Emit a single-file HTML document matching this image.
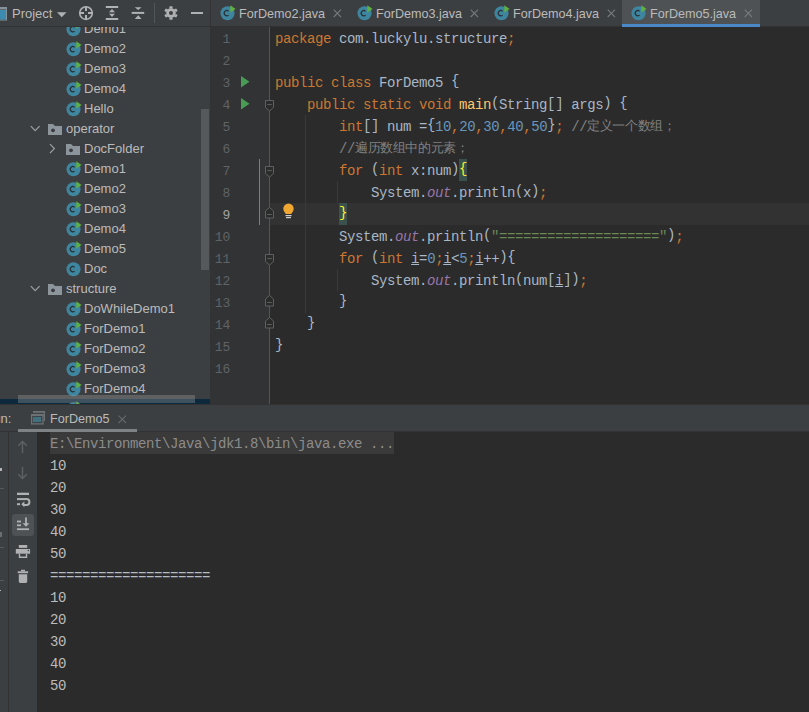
<!DOCTYPE html>
<html><head><meta charset="utf-8">
<style>
*{margin:0;padding:0;box-sizing:border-box}
html,body{width:809px;height:712px;overflow:hidden;background:#3c3f41}
body{position:relative;font-family:"Liberation Sans",sans-serif;font-size:13px;color:#bbbbbb}
.a{position:absolute}
.ui{font-family:"Liberation Sans",sans-serif;font-size:13px;color:#bbbbbb;white-space:pre;line-height:20px}
.mono{font-family:"Liberation Mono",monospace;font-size:14px;letter-spacing:-0.4px;white-space:pre;line-height:22px;color:#a9b7c6}
.k{color:#cc7832}.n{color:#6897bb}.s{color:#6a8759}.c{color:#808080}.f{color:#9876aa;font-style:italic}.m{color:#ffc66d}
.u{text-decoration:underline;text-underline-offset:1px;text-decoration-thickness:1px}
.bm{color:#ffef28}
.br{position:relative;top:-2px}
.pp{position:relative;top:-2px}
.sb{position:relative;top:-1px}
.cjk{font-size:12.5px;line-height:10px;position:relative;top:-1px}
.ln{color:#606366;font-size:13px;letter-spacing:-0.2px}
.tab{font-size:12.6px}
svg{display:block}
</style></head><body>
<svg width="0" height="0" style="position:absolute">
<defs>
<symbol id="ci" viewBox="0 0 16 16">
<circle cx="8" cy="8.3" r="7" fill="#3e86a0"/>
<path d="M9.1 6.3 A2.6 2.6 0 1 0 9.1 10.1" fill="none" stroke="#2a2d2f" stroke-width="1.15"/>
<path d="M10.8 0.3 L16.1 4 L10.8 7.6 Z" fill="#5fb043"/>
</symbol>
<symbol id="cp" viewBox="0 0 16 16">
<circle cx="8" cy="8.3" r="7" fill="#3e86a0"/>
<path d="M9.1 6.3 A2.6 2.6 0 1 0 9.1 10.1" fill="none" stroke="#2a2d2f" stroke-width="1.15"/>
</symbol>
<symbol id="fo" viewBox="0 0 14 11">
<path d="M0 0 H5 L7 2 H14 V11 H0 Z" fill="#8c959b"/>
<circle cx="5" cy="6.3" r="1.9" fill="#3a3d3f"/>
</symbol>
</defs>
</svg>

<!-- ===== top header (project) ===== -->
<div class="a" style="left:0;top:0;width:210px;height:26px;background:#3c3f41"></div>
<div class="a" style="left:0;top:26px;width:809px;height:1px;background:#323232"></div>
<div class="a" style="left:210px;top:0;width:1px;height:26px;background:#323232"></div>

<!-- project icon -->
<svg class="a" style="left:0;top:7px" width="8" height="14"><rect x="-7" y="0.5" width="13.5" height="12.5" fill="none" stroke="#87939a" stroke-width="1"/><rect x="-7" y="0" width="13.5" height="2.5" fill="#87939a"/><rect x="-6" y="3" width="12" height="9.5" fill="#3d8baf"/></svg>
<div class="a ui" style="left:12px;top:4px">Project</div>
<svg class="a" style="left:57px;top:12px" width="10" height="6"><path d="M0 0.3 H9.5 L4.75 5.3 Z" fill="#afb1b3"/></svg>
<svg class="a" style="left:78px;top:5px" width="16" height="16"><circle cx="8" cy="8.1" r="6.3" fill="none" stroke="#afb1b3" stroke-width="1.6"/><path d="M1.5 8.1 H6 M10 8.1 H14.5 M8 1.6 V6.1 M8 10.1 V14.6" stroke="#afb1b3" stroke-width="2"/></svg>
<svg class="a" style="left:105px;top:5px" width="14" height="16"><rect x="0.8" y="1" width="12.4" height="2" fill="#afb1b3"/><rect x="0.8" y="13" width="12.4" height="2" fill="#afb1b3"/><path d="M4 7.2 L7 4.1 L10 7.2 Z M4 8.7 L7 11.9 L10 8.7 Z" fill="#afb1b3"/></svg>
<svg class="a" style="left:131px;top:5px" width="14" height="16"><path d="M3.8 2.2 H10.6 L7.2 5.1 Z M3.8 14.1 H10.6 L7.2 10.3 Z" fill="#afb1b3"/><rect x="0.7" y="6.9" width="12.5" height="2" fill="#afb1b3"/></svg>
<div class="a" style="left:154px;top:3px;width:1px;height:20px;background:#515658"></div>
<svg class="a" style="left:163px;top:5px" width="16" height="16"><g fill="#afb1b3"><circle cx="8" cy="8" r="4.8"/><path d="M6.6 1.2 H9.4 L9.8 3.4 L6.2 3.4 Z" transform="rotate(0 8 8)"/><path d="M6.6 1.2 H9.4 L9.8 3.4 L6.2 3.4 Z" transform="rotate(60 8 8)"/><path d="M6.6 1.2 H9.4 L9.8 3.4 L6.2 3.4 Z" transform="rotate(120 8 8)"/><path d="M6.6 1.2 H9.4 L9.8 3.4 L6.2 3.4 Z" transform="rotate(180 8 8)"/><path d="M6.6 1.2 H9.4 L9.8 3.4 L6.2 3.4 Z" transform="rotate(240 8 8)"/><path d="M6.6 1.2 H9.4 L9.8 3.4 L6.2 3.4 Z" transform="rotate(300 8 8)"/></g><circle cx="8" cy="8" r="2" fill="#3c3f41"/></svg>
<div class="a" style="left:191px;top:12px;width:12px;height:2px;background:#afb1b3"></div>

<!-- ===== project tree ===== -->
<div class="a" style="left:0;top:27px;width:210px;height:377px;overflow:hidden;background:#3c3f41">
<div class="a" style="left:0;top:-27px;width:210px;height:404px">
<svg class="a" style="left:64.5px;top:20.5px" width="17" height="16"><use href="#ci"/></svg>
<div class="a ui" style="left:84px;top:19px">Demo1</div>
<svg class="a" style="left:64.5px;top:40.5px" width="17" height="16"><use href="#ci"/></svg>
<div class="a ui" style="left:84px;top:39px">Demo2</div>
<svg class="a" style="left:64.5px;top:60.5px" width="17" height="16"><use href="#ci"/></svg>
<div class="a ui" style="left:84px;top:59px">Demo3</div>
<svg class="a" style="left:64.5px;top:80.5px" width="17" height="16"><use href="#ci"/></svg>
<div class="a ui" style="left:84px;top:79px">Demo4</div>
<svg class="a" style="left:64.5px;top:100.5px" width="17" height="16"><use href="#ci"/></svg>
<div class="a ui" style="left:84px;top:99px">Hello</div>
<svg class="a" style="left:30px;top:125px" width="12" height="8"><path d="M0.8 1.2 L5.2 5.6 L9.6 1.2" fill="none" stroke="#9da0a2" stroke-width="1.2"/></svg>
<svg class="a" style="left:48px;top:124px" width="14" height="11"><use href="#fo"/></svg>
<div class="a ui" style="left:66px;top:119px">operator</div>
<svg class="a" style="left:48px;top:143px" width="8" height="12"><path d="M2 1.2 L6.4 5.6 L2 10" fill="none" stroke="#9da0a2" stroke-width="1.2"/></svg>
<svg class="a" style="left:66px;top:144px" width="14" height="11"><use href="#fo"/></svg>
<div class="a ui" style="left:84px;top:139px">DocFolder</div>
<svg class="a" style="left:64.5px;top:160.5px" width="17" height="16"><use href="#ci"/></svg>
<div class="a ui" style="left:84px;top:159px">Demo1</div>
<svg class="a" style="left:64.5px;top:180.5px" width="17" height="16"><use href="#ci"/></svg>
<div class="a ui" style="left:84px;top:179px">Demo2</div>
<svg class="a" style="left:64.5px;top:200.5px" width="17" height="16"><use href="#ci"/></svg>
<div class="a ui" style="left:84px;top:199px">Demo3</div>
<svg class="a" style="left:64.5px;top:220.5px" width="17" height="16"><use href="#ci"/></svg>
<div class="a ui" style="left:84px;top:219px">Demo4</div>
<svg class="a" style="left:64.5px;top:240.5px" width="17" height="16"><use href="#ci"/></svg>
<div class="a ui" style="left:84px;top:239px">Demo5</div>
<svg class="a" style="left:64.5px;top:260.5px" width="17" height="16"><use href="#cp"/></svg>
<div class="a ui" style="left:84px;top:259px">Doc</div>
<svg class="a" style="left:30px;top:285px" width="12" height="8"><path d="M0.8 1.2 L5.2 5.6 L9.6 1.2" fill="none" stroke="#9da0a2" stroke-width="1.2"/></svg>
<svg class="a" style="left:48px;top:284px" width="14" height="11"><use href="#fo"/></svg>
<div class="a ui" style="left:66px;top:279px">structure</div>
<svg class="a" style="left:64.5px;top:300.5px" width="17" height="16"><use href="#ci"/></svg>
<div class="a ui" style="left:84px;top:299px">DoWhileDemo1</div>
<svg class="a" style="left:64.5px;top:320.5px" width="17" height="16"><use href="#ci"/></svg>
<div class="a ui" style="left:84px;top:319px">ForDemo1</div>
<svg class="a" style="left:64.5px;top:340.5px" width="17" height="16"><use href="#ci"/></svg>
<div class="a ui" style="left:84px;top:339px">ForDemo2</div>
<svg class="a" style="left:64.5px;top:360.5px" width="17" height="16"><use href="#ci"/></svg>
<div class="a ui" style="left:84px;top:359px">ForDemo3</div>
<svg class="a" style="left:64.5px;top:380.5px" width="17" height="16"><use href="#ci"/></svg>
<div class="a ui" style="left:84px;top:379px">ForDemo4</div>
<div class="a" style="left:0;top:399px;width:210px;height:20px;background:#0d293e"></div>
<svg class="a" style="left:64.5px;top:400.5px" width="17" height="16"><use href="#ci"/></svg>
<div class="a ui" style="left:84px;top:399px">ForDemo5</div>
</div>
<div class="a" style="left:201px;top:82px;width:8px;height:161px;background:#56595b"></div>
<div class="a" style="left:18px;top:368px;width:177px;height:8px;background:rgba(165,165,165,0.33)"></div>
</div>

<!-- ===== editor tabs ===== -->
<div class="a" style="left:211px;top:0;width:598px;height:26px;background:#3c3f41"></div>
<div class="a" style="left:622px;top:0;width:138px;height:24px;background:#4e5254"></div>
<div class="a" style="left:622px;top:24px;width:138px;height:3px;background:#4a88c7"></div>
<svg class="a" style="left:218.6px;top:5px" width="17" height="16"><use href="#ci"/></svg>
<div class="a ui tab" style="left:239px;top:4px">ForDemo2.java</div>
<svg class="a" style="left:333px;top:8.5px" width="9" height="9"><path d="M0.7 0.7 L8 8 M8 0.7 L0.7 8" stroke="#76797b" stroke-width="1.1"/></svg>
<svg class="a" style="left:355.6px;top:5px" width="17" height="16"><use href="#ci"/></svg>
<div class="a ui tab" style="left:376px;top:4px">ForDemo3.java</div>
<svg class="a" style="left:470px;top:8.5px" width="9" height="9"><path d="M0.7 0.7 L8 8 M8 0.7 L0.7 8" stroke="#76797b" stroke-width="1.1"/></svg>
<svg class="a" style="left:492.6px;top:5px" width="17" height="16"><use href="#ci"/></svg>
<div class="a ui tab" style="left:513px;top:4px">ForDemo4.java</div>
<svg class="a" style="left:607px;top:8.5px" width="9" height="9"><path d="M0.7 0.7 L8 8 M8 0.7 L0.7 8" stroke="#76797b" stroke-width="1.1"/></svg>
<svg class="a" style="left:629.6px;top:5px" width="17" height="16"><use href="#ci"/></svg>
<div class="a ui tab" style="left:650px;top:4px">ForDemo5.java</div>
<svg class="a" style="left:744px;top:8.5px" width="9" height="9"><path d="M0.7 0.7 L8 8 M8 0.7 L0.7 8" stroke="#76797b" stroke-width="1.1"/></svg>

<!-- ===== editor ===== -->
<div class="a" style="left:210px;top:27px;width:60px;height:377px;background:#313335"></div>
<div class="a" style="left:270px;top:27px;width:539px;height:377px;background:#2b2b2b"></div>
<div class="a" style="left:270px;top:203px;width:539px;height:22px;background:#323232"></div>
<div class="a" style="left:459px;top:159px;width:8px;height:22px;background:#3b514d"></div>
<div class="a" style="left:339px;top:203px;width:8px;height:22px;background:#3b514d"></div>
<div class="a" style="left:269px;top:27px;width:1px;height:377px;background:#555555"></div>


<!-- gutter -->
<div class="a mono ln" style="left:200px;top:29px;width:30px;text-align:right">1
2
3
4
5
6
7
8
<span style="color:#a4a3a3">9</span>
10
11
12
13
14
15
16</div>
<svg class="a" style="left:241px;top:76px" width="9" height="34"><path d="M0 0 L8.5 5.8 L0 11.6 Z M0 22 L8.5 27.8 L0 33.6 Z" fill="#499c54"/></svg>
<div class="a" style="left:305px;top:115px;width:1px;height:198px;background:#393939"></div>
<div class="a" style="left:337px;top:181px;width:1px;height:22px;background:#393939"></div>
<div class="a" style="left:337px;top:269px;width:1px;height:22px;background:#393939"></div>
<div class="a" style="left:259px;top:159px;width:1px;height:66px;background:#5e8c82"></div>
<svg class="a" style="left:265px;top:100px" width="9" height="12"><path d="M0.5 0.5 H8.5 V7.5 L4.5 11 L0.5 7.5 Z" fill="#2b2b2b" stroke="#5e6060" stroke-width="1"/><path d="M2.2 4.6 H6.8" stroke="#5e6060" stroke-width="1"/></svg>
<svg class="a" style="left:265px;top:166px" width="9" height="12"><path d="M0.5 0.5 H8.5 V7.5 L4.5 11 L0.5 7.5 Z" fill="#2b2b2b" stroke="#5e6060" stroke-width="1"/><path d="M2.2 4.6 H6.8" stroke="#5e6060" stroke-width="1"/></svg>
<svg class="a" style="left:265px;top:207px" width="9" height="12"><path d="M0.5 11 H8.5 V4 L4.5 0.5 L0.5 4 Z" fill="#2b2b2b" stroke="#5e6060" stroke-width="1"/><path d="M2.2 7.5 H6.8" stroke="#5e6060" stroke-width="1"/></svg>
<svg class="a" style="left:265px;top:254px" width="9" height="12"><path d="M0.5 0.5 H8.5 V7.5 L4.5 11 L0.5 7.5 Z" fill="#2b2b2b" stroke="#5e6060" stroke-width="1"/><path d="M2.2 4.6 H6.8" stroke="#5e6060" stroke-width="1"/></svg>
<svg class="a" style="left:265px;top:295px" width="9" height="12"><path d="M0.5 11 H8.5 V4 L4.5 0.5 L0.5 4 Z" fill="#2b2b2b" stroke="#5e6060" stroke-width="1"/><path d="M2.2 7.5 H6.8" stroke="#5e6060" stroke-width="1"/></svg>
<svg class="a" style="left:265px;top:317px" width="9" height="12"><path d="M0.5 11 H8.5 V4 L4.5 0.5 L0.5 4 Z" fill="#2b2b2b" stroke="#5e6060" stroke-width="1"/><path d="M2.2 7.5 H6.8" stroke="#5e6060" stroke-width="1"/></svg>
<svg class="a" style="left:283px;top:203px" width="12" height="16"><circle cx="5.5" cy="5.8" r="5.2" fill="#f0a732"/><rect x="2.5" y="9" width="6" height="2" fill="#f0a732"/><rect x="2.5" y="12" width="6" height="1.2" fill="#cfcfcf"/><rect x="3" y="14" width="5" height="1.2" fill="#cfcfcf"/></svg>
<div class="a mono" style="left:275px;top:28px"><span class="k">package</span> com.luckylu.structure<span class="k">;</span>

<span class="k">public class</span> ForDemo5 <span class="br">{</span>
    <span class="k">public static void</span> <span class="m">main</span><span class="pp">(</span>String<span class="sb">[</span><span class="sb">]</span> args<span class="pp">)</span> <span class="br">{</span>
        <span class="k">int</span><span class="sb">[</span><span class="sb">]</span> num =<span class="br">{</span><span class="n">10</span><span class="k">,</span><span class="n">20</span><span class="k">,</span><span class="n">30</span><span class="k">,</span><span class="n">40</span><span class="k">,</span><span class="n">50</span><span class="br">}</span><span class="k">;</span> <span class="c">//<span class="cjk">定义一个数组；</span></span>
        <span class="c">//<span class="cjk">遍历数组中的元素；</span></span>
        <span class="k">for</span> <span class="pp">(</span><span class="k">int</span> x:num<span class="pp">)</span><span class="bm br">{</span>
            System.<span class="f">out</span>.println<span class="pp">(</span>x<span class="pp">)</span><span class="k">;</span>
        <span class="bm br">}</span>
        System.<span class="f">out</span>.println<span class="pp">(</span><span class="s">"===================="</span><span class="pp">)</span><span class="k">;</span>
        <span class="k">for</span> <span class="pp">(</span><span class="k">int</span> <span class="u">i</span>=<span class="n">0</span><span class="k">;</span><span class="u">i</span>&lt;<span class="n">5</span><span class="k">;</span><span class="u">i</span>++<span class="pp">)</span><span class="br">{</span>
            System.<span class="f">out</span>.println<span class="pp">(</span>num<span class="sb">[</span><span class="u">i</span><span class="sb">]</span><span class="pp">)</span><span class="k">;</span>
        <span class="br">}</span>
    <span class="br">}</span>
<span class="br">}</span>
</div>

<!-- ===== run panel ===== -->
<div class="a" style="left:0;top:404px;width:809px;height:1px;background:#323232"></div>
<div class="a" style="left:0;top:405px;width:809px;height:27px;background:#3c3f41"></div>
<div class="a" style="left:0;top:431px;width:809px;height:1px;background:#323232"></div>
<div class="a" style="left:18px;top:429px;width:119px;height:3px;background:#7e8285"></div>
<div class="a ui" style="left:-16px;top:409px">Run:</div>
<svg class="a" style="left:30px;top:410px" width="17" height="16"><rect x="3" y="1" width="12" height="1.8" fill="#6e7173"/><rect x="13.8" y="1" width="1.2" height="10" fill="#6e7173"/><rect x="1.6" y="4.6" width="11.4" height="9.3" fill="none" stroke="#6e7173" stroke-width="1.3"/><rect x="1" y="4" width="12.6" height="2" fill="#6e7173"/><rect x="3" y="6.9" width="8.2" height="5.2" fill="#41707f"/></svg>
<div class="a ui tab" style="left:50px;top:409px">ForDemo5</div>
<svg class="a" style="left:118px;top:415px" width="9" height="9"><path d="M0.6 0.6 L8 8 M8 0.6 L0.6 8" stroke="#65686b" stroke-width="1.1"/></svg>

<div class="a" style="left:0;top:432px;width:8px;height:280px;background:#3c3f41"></div>
<div class="a" style="left:8px;top:432px;width:1px;height:280px;background:#323232"></div>
<div class="a" style="left:9px;top:432px;width:28px;height:280px;background:#3c3f41"></div>
<div class="a" style="left:37px;top:432px;width:772px;height:280px;background:#2b2b2b"></div>
<div class="a" style="left:50px;top:432px;width:344px;height:22px;background:#3a3a3a"></div>
<!-- left strip marks -->
<div class="a" style="left:0;top:468px;width:2px;height:3px;background:#b5b5b5"></div>
<div class="a" style="left:0;top:488px;width:4px;height:1px;background:#55585a"></div>
<div class="a" style="left:0;top:532px;width:2px;height:5px;background:#6a6d6f"></div>
<div class="a" style="left:0;top:547px;width:4px;height:1px;background:#55585a"></div>
<div class="a" style="left:0;top:580px;width:4px;height:1px;background:#55585a"></div>
<div class="a" style="left:0;top:590px;width:1px;height:1px;background:#b5b5b5"></div>
<!-- run toolbar -->
<svg class="a" style="left:17px;top:440px" width="12" height="14"><path d="M5.5 1.5 V13.2 M1.2 5.8 L5.5 1.5 L9.8 5.8" fill="none" stroke="#5e6164" stroke-width="1.4"/></svg>
<svg class="a" style="left:17px;top:466px" width="12" height="14"><path d="M5.5 0.8 V12.5 M1.2 8.2 L5.5 12.5 L9.8 8.2" fill="none" stroke="#5e6164" stroke-width="1.4"/></svg>
<svg class="a" style="left:16px;top:491px" width="16" height="18"><g fill="#afb1b3"><rect x="1" y="1.7" width="12" height="2.3"/><rect x="1" y="7.1" width="9" height="2"/><rect x="1" y="12.2" width="3" height="2"/></g><path d="M9.5 8.1 H10.5 A2.9 2.9 0 0 1 10.5 13.9 H7" fill="none" stroke="#afb1b3" stroke-width="2"/><path d="M5.2 13.2 L8.4 10.2 V16.2 Z" fill="#afb1b3"/></svg>
<div class="a" style="left:12px;top:514px;width:22px;height:22px;border-radius:3px;background:#4e5254"></div>
<svg class="a" style="left:16px;top:516px" width="16" height="16"><g fill="#afb1b3"><rect x="1" y="4.6" width="4" height="1.8"/><rect x="1" y="8.4" width="4" height="1.8"/><rect x="1" y="12.3" width="12" height="1.8"/><rect x="9.1" y="1.5" width="1.8" height="7"/><path d="M6.6 7.2 H13.4 L10 10.8 Z"/></g></svg>
<svg class="a" style="left:15px;top:544px" width="16" height="15"><g fill="#afb1b3"><rect x="3.8" y="1" width="8.4" height="2.9"/><rect x="0.8" y="5" width="14.3" height="4.7"/><path d="M3.8 9.7 H12.2 V13.9 H3.8 Z M5.2 9.7 V12.5 H10.8 V9.7 Z" fill-rule="evenodd"/></g><circle cx="13.4" cy="6.5" r="0.8" fill="#3c3f41"/></svg>
<svg class="a" style="left:17px;top:569px" width="12" height="15"><g fill="#afb1b3"><rect x="4" y="0.8" width="4" height="1.6"/><rect x="0.7" y="2.3" width="10.4" height="1.9"/><path d="M1.8 5.2 H10.2 V12.6 Q10.2 14 8.8 14 H3.2 Q1.8 14 1.8 12.6 Z"/></g></svg>


<div class="a mono" style="left:50px;top:433px;color:#bbbbbb"><span style="color:#8c8c8c">E:\Environment\Java\jdk1.8\bin\java.exe ...</span>
10
20
30
40
50
====================
10
20
30
40
50
</div>

</body></html>
